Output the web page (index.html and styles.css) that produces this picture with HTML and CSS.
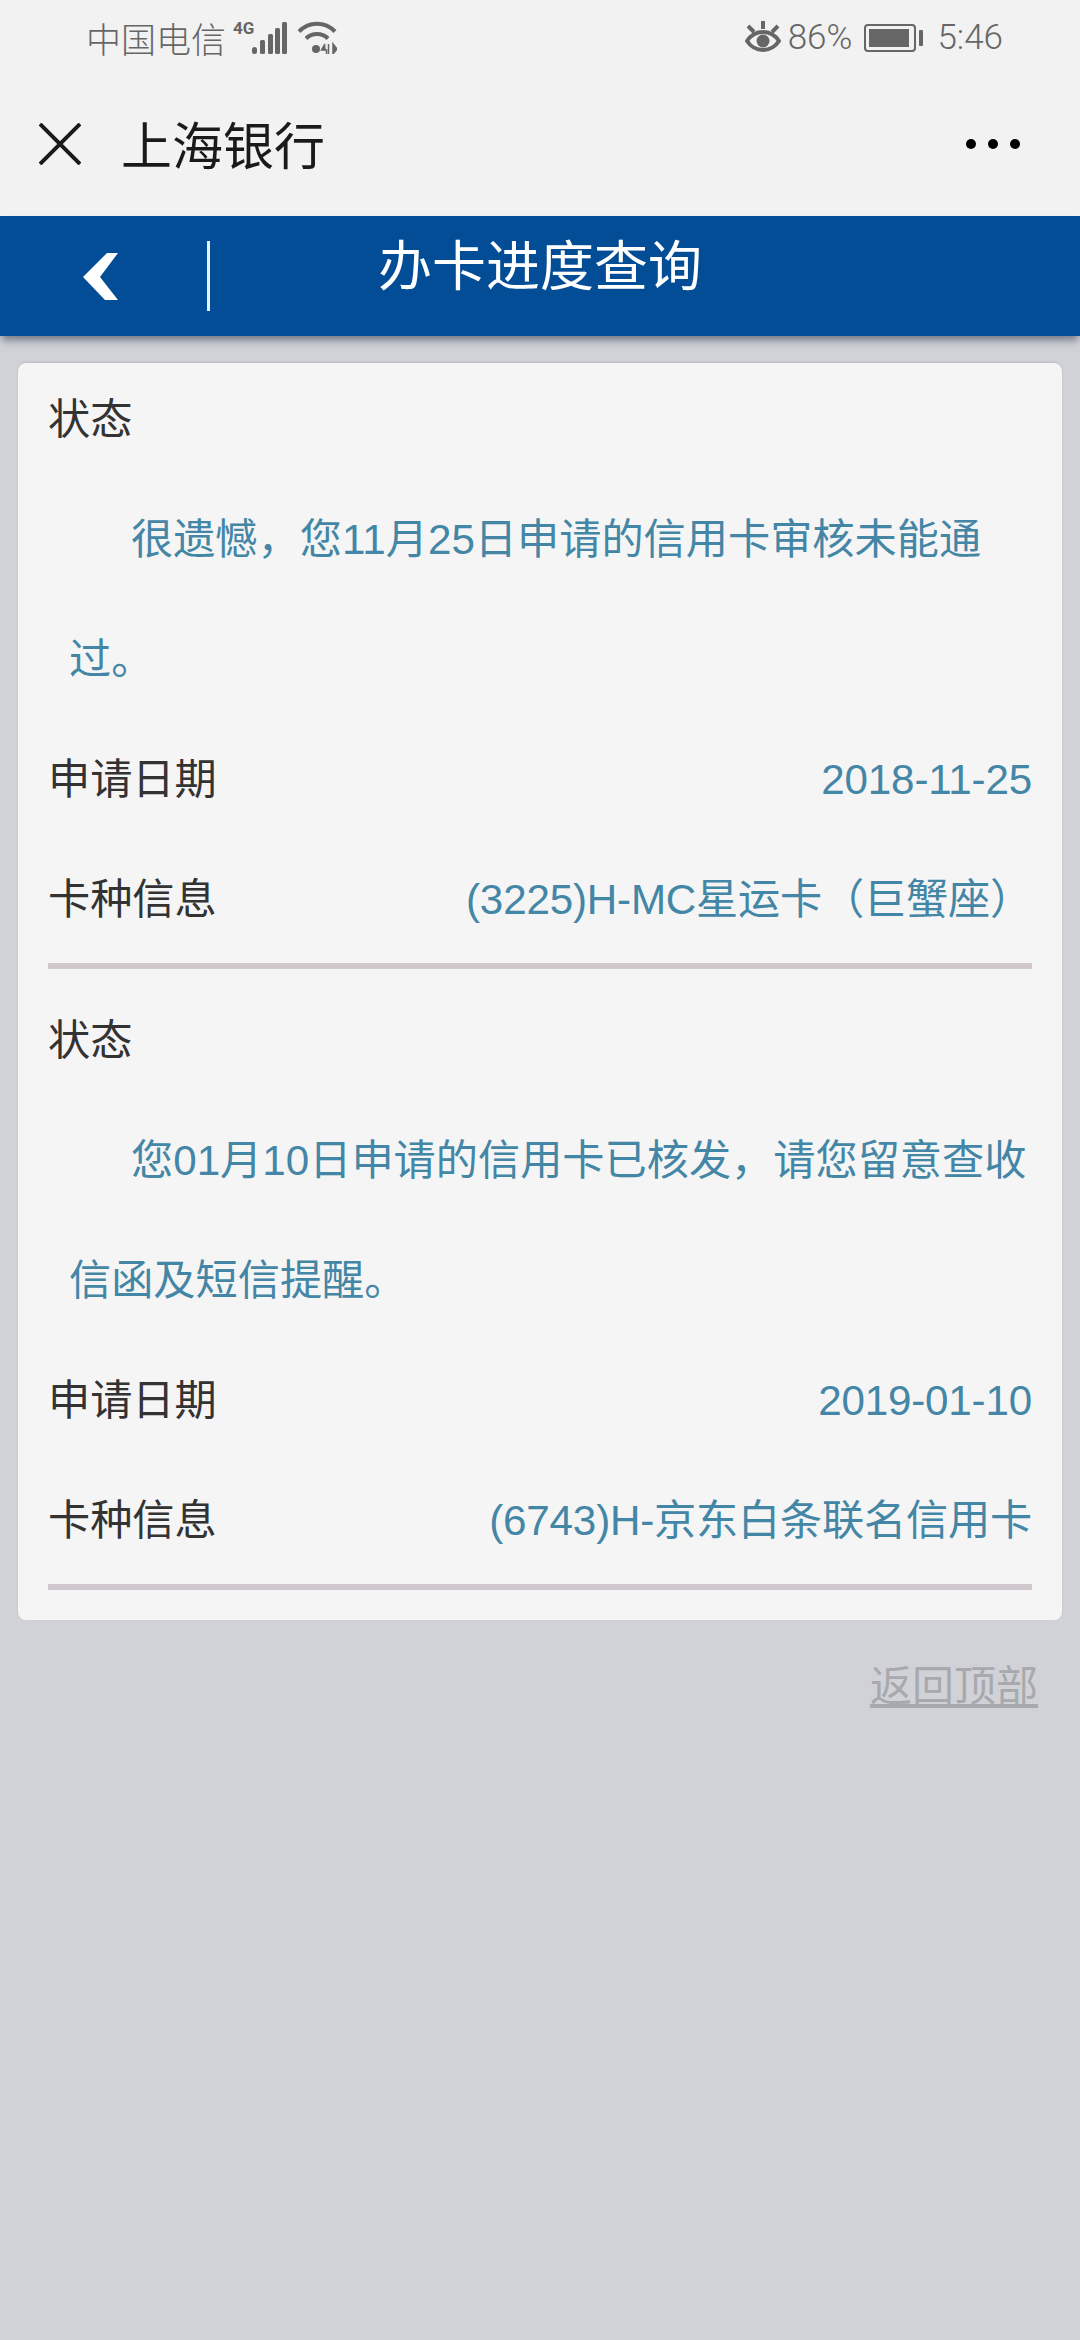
FILE: index.html
```html
<!DOCTYPE html>
<html lang="zh-CN">
<head>
  <meta charset="UTF-8">
  <meta name="viewport" content="width=device-width, initial-scale=1.0">
  <title>办卡进度查询 - 上海银行</title>
  <link rel="stylesheet" href="styles.css">
</head>
<body>
  <div class="statusbar">
    <div class="status-left">
      <span class="carrier">中国电信</span>
      <span class="net">4G</span>
      <svg class="signal" width="35" height="32" viewBox="0 0 35 32" fill="#666">
        <rect x="0" y="25" width="5" height="7" rx="2.5"/>
        <rect x="8" y="18" width="5" height="14" rx="1.5"/>
        <rect x="16" y="12" width="5" height="20" rx="1.5"/>
        <rect x="23" y="6" width="5" height="26" rx="1.5"/>
        <rect x="30" y="0" width="5" height="32" rx="1.5"/>
      </svg>
      <svg class="wifi" width="40" height="33" viewBox="0 0 40 33" fill="none" stroke="#666" stroke-width="4">
        <path d="M2 10.5C12 0 28 0 38 10.5"/>
        <path d="M9 17.5C15 11.500 25 11.500 31 17.500"/>
        <circle cx="19" cy="28" r="4" fill="#666" stroke="none"/>
        <path d="M28 23l-3.500 6h5v4M31.500 33v-10M36 23v10l4-5z" stroke-width="1.500" fill="#666"/>
      </svg>
    </div>
    <div class="status-right">
      <svg class="eye" width="36" height="32" viewBox="0 0 36 32" fill="none" stroke="#666" stroke-width="4">
        <path d="M2 20C10 8 26 8 34 20C26 32 10 32 2 20Z"/>
        <circle cx="18" cy="20" r="6.500" fill="#666" stroke="none"/>
        <path d="M18 0v8M3 5l6 6M33 5l-6 6"/>
      </svg>
      <span class="pct">86%</span>
      <span class="battery"><span class="battery-fill"></span></span>
      <span class="battery-nub"></span>
      <span class="clock">5:46</span>
    </div>
  </div>

  <div class="wx-header">
    <svg class="close-icon" width="42" height="42" viewBox="0 0 42 42" stroke="#1a1a1a" stroke-width="4">
      <path d="M1 1L41 41M41 1L1 41"/>
    </svg>
    <span class="wx-title">上海银行</span>
    <div class="more">
      <i></i><i></i><i></i>
    </div>
  </div>

  <div class="navbar">
    <div class="nav-left">
      <svg class="back" width="35" height="47" viewBox="0 0 35 47" fill="#fff">
        <polygon points="0,24 24,0 35,0 17,24 35,47 22,47"/>
      </svg>
      <span class="nav-line"></span>
    </div>
    <div class="nav-title">办卡进度查询</div>
    <div></div>
  </div>

  <div class="card">
    <div class="item">
      <div class="row row-head"><span>状态</span></div>
      <p class="notice">很遗憾，您11月25日申请的信用卡审核未能通过。</p>
      <div class="row"><span>申请日期</span><span class="value">2018-11-25</span></div>
      <div class="row"><span>卡种信息</span><span class="value">(3225)H-MC星运卡（巨蟹座）</span></div>
    </div>
    <div class="item">
      <div class="row row-head"><span>状态</span></div>
      <p class="notice">您01月10日申请的信用卡已核发，请您留意查收信函及短信提醒。</p>
      <div class="row"><span>申请日期</span><span class="value">2019-01-10</span></div>
      <div class="row"><span>卡种信息</span><span class="value">(6743)H-京东白条联名信用卡</span></div>
    </div>
  </div>

  <div class="to-top"><a href="#">返回顶部</a></div>
</body>
</html>
```

FILE: styles.css
```css
body {
  margin: 0;
  height: 2340px;
  overflow: hidden;
  font-family: "Liberation Sans", "Noto Sans CJK SC", sans-serif;
  background: #d1d2d8;
  color: #333;
}
.statusbar {
  height: 72px;
  box-sizing: border-box;
  background: #f2f2f2;
  display: flex;
  justify-content: space-between;
  align-items: center;
  padding: 3px 77px 0 86px;
  color: #666;
  font-family: Roboto, "Noto Sans CJK SC", sans-serif;
  font-size: 35px;
  font-weight: 300;
}
.status-left, .status-right {
  display: flex;
  align-items: center;
}
.net {
  font-size: 17px;
  font-weight: bold;
  line-height: 16px;
  margin: -20px -2px 0 7px;
}
.wifi {
  margin-left: 10px;
}
.eye {
  margin-top: -2px;
}
.pct {
  margin-left: 7px;
}
.battery {
  margin-left: 12px;
  width: 52px;
  height: 28px;
  box-sizing: border-box;
  border: 2px solid #666;
  border-radius: 4px;
  padding: 3px;
  display: flex;
}
.battery-fill {
  width: 40px;
  background: #666;
}
.battery-nub {
  width: 4px;
  height: 16px;
  margin-left: 3px;
  background: #666;
  border-radius: 1px;
}
.clock {
  margin-left: 14px;
}
.wx-header {
  height: 144px;
  background: #f2f2f2;
  display: flex;
  align-items: center;
  padding: 0 60px 0 39px;
}
.close-icon {
  margin-right: 40px;
}
.wx-title {
  font-size: 51px;
  color: #1a1a1a;
  padding-bottom: 2px;
}
.more {
  margin-left: auto;
  display: flex;
  gap: 12px;
}
.more i {
  width: 10px;
  height: 10px;
  border-radius: 50%;
  background: #000;
}
.navbar {
  position: relative;
  height: 120px;
  background: #034d97;
  box-shadow: 0 6px 8px -2px rgba(30,40,60,0.55);
  display: grid;
  grid-template-columns: 1fr auto 1fr;
  align-items: center;
}
.nav-left {
  display: flex;
  align-items: center;
  padding-left: 83px;
}
.nav-line {
  width: 3px;
  height: 70px;
  margin-left: 89px;
  background: #e8f3ff;
}
.nav-title {
  font-size: 54px;
  color: #fff;
  padding-bottom: 27px;
}
.card {
  margin: 27px 18px 0 18px;
  padding: 0 30px 30px 30px;
  background: #f5f5f6;
  border-radius: 8px;
  box-shadow: 0 -1px 2px rgba(0,0,0,0.12);
}
.item {
  border-bottom: 6px solid #d0c8cc;
  padding-bottom: 3px;
  font-size: 42.2px;
}
.item + .item {
  margin-top: 15px;
}
.row {
  height: 120px;
  line-height: 120px;
  display: flex;
  justify-content: space-between;
}
.row-head {
  height: 117px;
  line-height: 114px;
}
.value {
  color: #4486a5;
  letter-spacing: -0.2px;
}
.notice {
  margin: 0;
  padding: 0 0 0 21px;
  line-height: 120px;
  text-indent: 62px;
  color: #4486a5;
}
.to-top {
  text-align: right;
  padding: 37px 42px 0 0;
  font-size: 42px;
  line-height: 60px;
}
.to-top a {
  color: #a8a9ad;
}
```
